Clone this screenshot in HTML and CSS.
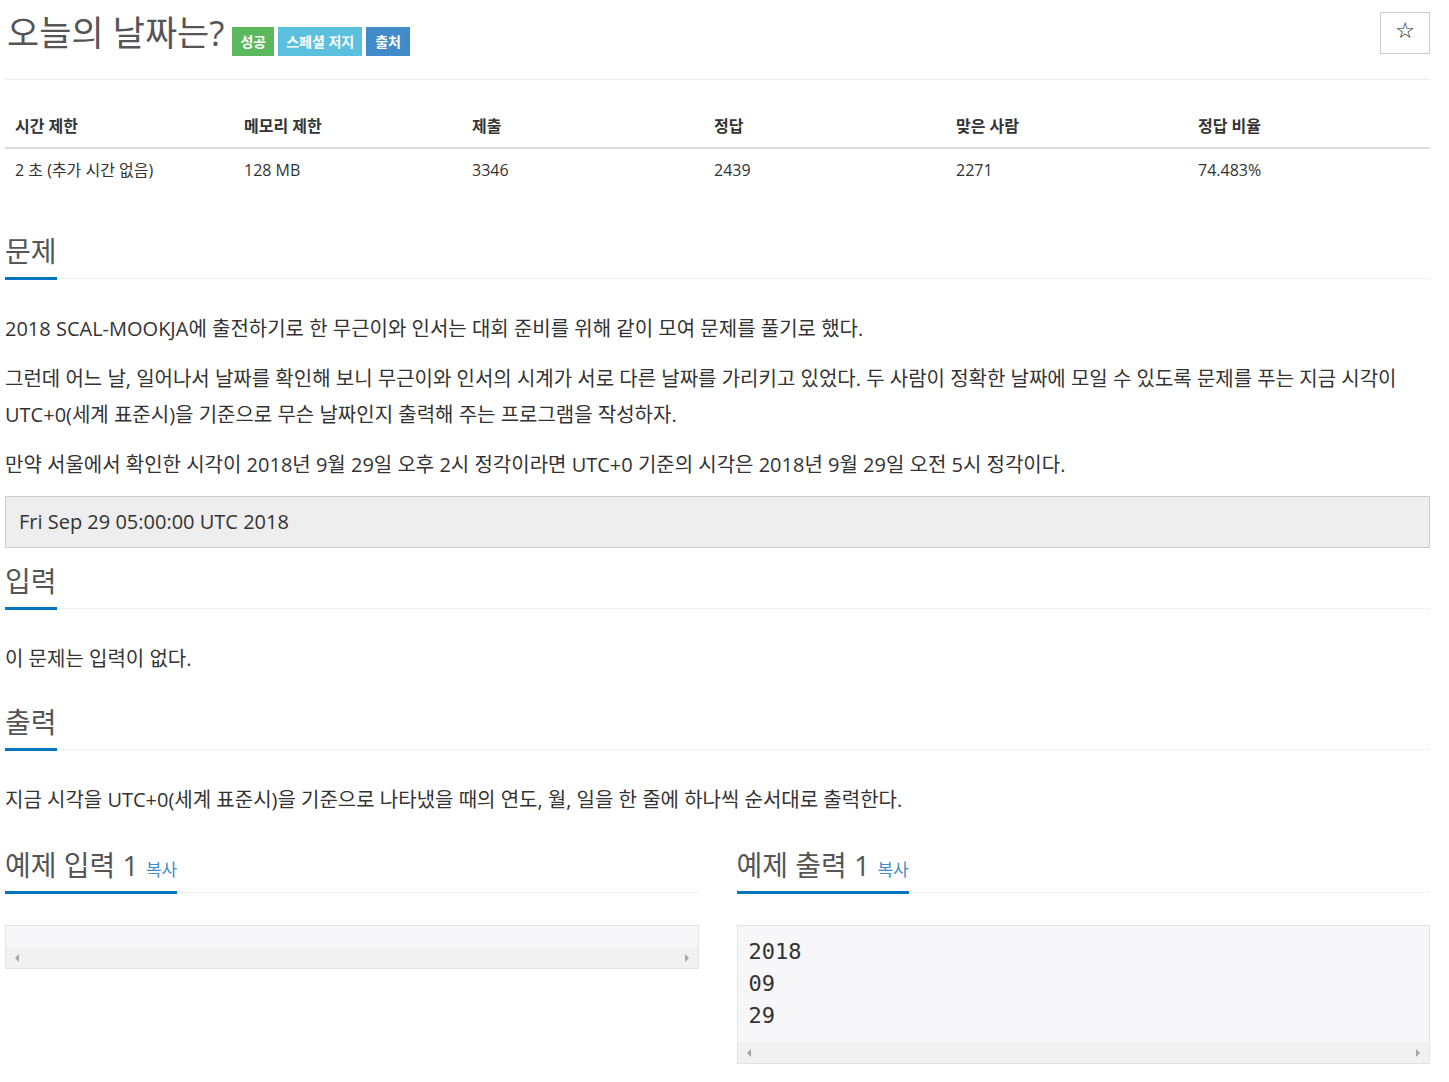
FILE: index.html
```html
<!DOCTYPE html>
<html lang="ko">
<head>
  <meta charset="UTF-8" />
  <title>오늘의 날짜는?</title>
  <link rel="stylesheet" href="styles.css">
</head>
<body>
  <div class="page">

    <div class="page-header">
      <h1 class="title">
        <span class="title-text">오늘의 날짜는?</span>
        <span class="label label-success">성공</span>
        <span class="label label-info">스페셜 저지</span>
        <span class="label label-primary">출처</span>
      </h1>
      <button class="star-btn">☆</button>
    </div>

    <table class="info-table">
      <colgroup>
        <col class="c1"><col class="c2"><col class="c3"><col class="c3"><col class="c3"><col class="c3">
      </colgroup>
      <thead>
        <tr>
          <th>시간 제한</th>
          <th>메모리 제한</th>
          <th>제출</th>
          <th>정답</th>
          <th>맞은 사람</th>
          <th>정답 비율</th>
        </tr>
      </thead>
      <tbody>
        <tr>
          <td>2 초 (추가 시간 없음)</td>
          <td>128 MB</td>
          <td>3346</td>
          <td>2439</td>
          <td>2271</td>
          <td>74.483%</td>
        </tr>
      </tbody>
    </table>

    <section class="problem-section first">
      <div class="headline"><h2>문제</h2></div>
      <p>2018 SCAL-MOOKJA에 출전하기로 한 무근이와 인서는 대회 준비를 위해 같이 모여 문제를 풀기로 했다.</p>
      <p>그런데 어느 날, 일어나서 날짜를 확인해 보니 무근이와 인서의 시계가 서로 다른 날짜를 가리키고 있었다. 두 사람이 정확한 날짜에 모일 수 있도록 문제를 푸는 지금 시각이 UTC+0(세계 표준시)을 기준으로 무슨 날짜인지 출력해 주는 프로그램을 작성하자.</p>
      <p>만약 서울에서 확인한 시각이 2018년 9월 29일 오후 2시 정각이라면 UTC+0 기준의 시각은 2018년 9월 29일 오전 5시 정각이다.</p>
      <pre class="date-box">Fri Sep 29 05:00:00 UTC 2018</pre>
    </section>

    <section class="problem-section tight">
      <div class="headline"><h2>입력</h2></div>
      <p>이 문제는 입력이 없다.</p>
    </section>

    <section class="problem-section">
      <div class="headline"><h2>출력</h2></div>
      <p>지금 시각을 UTC+0(세계 표준시)을 기준으로 나타냈을 때의 연도, 월, 일을 한 줄에 하나씩 순서대로 출력한다.</p>
    </section>

    <div class="samples">
      <section class="sample">
        <div class="headline"><h2>예제 입력 1 <a class="copy-link">복사</a></h2></div>
        <div class="sample-box">
          <pre class="sample-data empty"></pre>
          <div class="fake-scroll"><span class="arrow left"></span><span class="arrow right"></span></div>
        </div>
      </section>
      <section class="sample">
        <div class="headline"><h2>예제 출력 1 <a class="copy-link">복사</a></h2></div>
        <div class="sample-box">
          <pre class="sample-data">2018
09
29</pre>
          <div class="fake-scroll"><span class="arrow left"></span><span class="arrow right"></span></div>
        </div>
      </section>
    </div>

  </div>
</body>
</html>
```

FILE: styles.css
```css
* { box-sizing: border-box; }

body {
  margin: 0;
  background: #fff;
  color: #333;
  font-family: "Open Sans", "Noto Sans CJK KR", sans-serif;
}

.page {
  padding: 0 19px 0 5px;
}

/* 제목 영역 */
.page-header {
  display: flex;
  justify-content: space-between;
  align-items: flex-start;
  padding-top: 12px;
  padding-bottom: 23px;
  border-bottom: 1px solid #eee;
}

.title {
  display: flex;
  align-items: flex-start;
  gap: 4px;
  margin: 0;
  font-size: 35px;
  font-weight: 400;
  line-height: 42px;
  color: #555;
  padding-left: 2px;
}

.label {
  margin-top: 15px;
  padding: 0 9px;
  height: 29px;
  line-height: 29px;
  font-size: 14px;
  font-weight: 700;
  color: #fff;
}
.label-success { background: #5cb85c; margin-left: 4px; padding: 0 8px; }
.label-info { background: #5bc0de; padding: 0 8px; }
.label-primary { background: #428bca; }

.star-btn {
  width: 50px;
  height: 42px;
  border: 1px solid #ccc;
  background: #fff;
  font-size: 22px;
  line-height: 1;
  color: #111;
  padding: 0 0 4px;
  font-family: "DejaVu Sans", sans-serif;
}

/* 정보 테이블 */
.info-table {
  width: 100%;
  margin: 25px 0 0;
  border-collapse: collapse;
  table-layout: fixed;
}
.info-table .c1 { width: 229px; }
.info-table .c2 { width: 228px; }
.info-table th, .info-table td {
  text-align: left;
  padding: 10px 10px;
  line-height: 22px;
  font-size: 16px;
}
.info-table th {
  font-weight: 700;
  color: #333;
  border-bottom: 2px solid #ddd;
}
.info-table td {
  color: #333;
}

/* 섹션 */
.problem-section { margin-top: 27px; }
.problem-section.first { margin-top: 42px; }
.problem-section.tight { margin-top: 15px; }

.headline {
  border-bottom: 1px dotted #e4e4e4;
  margin-bottom: 32px;
}
.headline h2 {
  display: inline-block;
  margin: 0 0 -2px;
  padding-bottom: 8px;
  border-bottom: 3px solid #0076c0;
  font-size: 28px;
  font-weight: 400;
  line-height: 36px;
  color: #555;
}

p {
  margin: 0 0 14px;
  font-size: 20px;
  line-height: 36px;
  color: #333;
}

.date-box {
  margin: -1px 0 0;
  padding: 12px 13px;
  background: #eee;
  border: 1px solid #ccc;
  font-family: "Open Sans", sans-serif;
  font-size: 20px;
  line-height: 26px;
  color: #333;
}

/* 예제 */
.samples {
  display: flex;
  gap: 38px;
  margin-top: 29px;
}
.sample { flex: 1; }

.copy-link {
  font-size: 17px;
  line-height: 1;
  color: #428bca;
}

.sample-box {
  border: 1px solid #e1e1e8;
  background: #f7f7f9;
}
.sample-data {
  margin: 0;
  padding: 10px 11px;
  font-family: "DejaVu Sans Mono", monospace;
  font-size: 22px;
  line-height: 32px;
  color: #333;
}
.sample-data.empty {
  height: 21px;
  padding: 0;
}

.fake-scroll {
  height: 21px;
  background: #f1f1f1;
  display: flex;
  justify-content: space-between;
  align-items: center;
  padding: 0 9px;
}
.arrow {
  width: 0;
  height: 0;
  border-top: 4px solid transparent;
  border-bottom: 4px solid transparent;
}
.arrow.left { border-right: 4px solid #a3a3a3; }
.arrow.right { border-left: 4px solid #a3a3a3; }
```
